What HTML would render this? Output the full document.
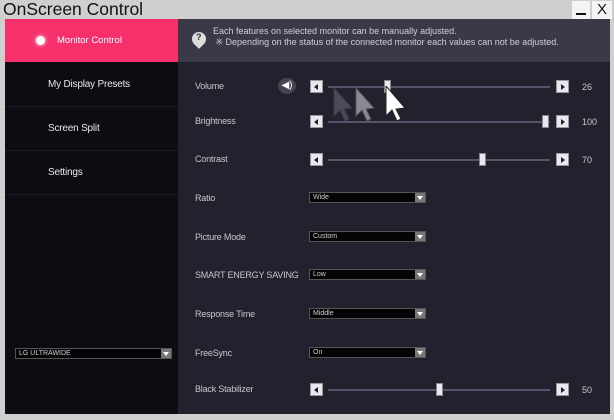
<!DOCTYPE html>
<html><head><meta charset="utf-8"><style>
*{margin:0;padding:0;box-sizing:border-box}
body{width:614px;height:420px;background:#cfcfcf;font-family:"Liberation Sans",sans-serif;position:relative;overflow:hidden}
.a{position:absolute}
.title{left:3px;top:-1px;font-size:17.5px;color:#111;line-height:20px}
.win{left:5px;top:19px;width:605px;height:395px;background:#22212e}
.side{left:5px;top:19px;width:173px;height:395px;background:#0d0c13}
.pink{left:5px;top:19px;width:173px;height:43px;background:#f5306b}
.info{left:178px;top:19px;width:432px;height:43px;background:#3a3948}
.si{left:48px;font-size:10px;color:#e8e8e8;letter-spacing:-0.2px}
.sep{left:5px;width:173px;height:1px;background:#1d1c26}
.lbl{left:195px;font-size:9px;color:#c8c8d0;letter-spacing:-0.2px}
.btn{width:13px;height:13px;background:#e8e8f0;border:1px solid #999}
.btn:after{content:"";position:absolute;top:3px;border-top:3px solid transparent;border-bottom:3px solid transparent}
.l:after{left:3px;border-right:4px solid #222}
.r:after{left:4px;border-left:4px solid #222}
.track{left:328px;width:222px;height:2px;background:#55546a}
.thumb{width:7px;height:13px;background:#e8e8f0;border:1px solid #888}
.val{left:582px;font-size:9px;color:#c8c8d0}
.dd{left:309px;width:117px;height:11px;background:#050508;border:1px solid #555}
.dd span{position:absolute;left:3px;top:0;font-size:7px;color:#ccc;line-height:9px}
.dd i{position:absolute;right:0;top:0;width:10px;height:9px;background:#777}
.dd i:after{content:"";position:absolute;left:2px;top:3px;border-left:3px solid transparent;border-right:3px solid transparent;border-top:4px solid #fff}
</style></head><body>
<div class="a title">OnScreen Control</div>
<div class="a" style="left:572px;top:1px;width:18px;height:18px;background:#f4f4f4"><div class="a" style="left:4px;top:12px;width:10px;height:2px;background:#111"></div></div>
<div class="a" style="left:592px;top:1px;width:20px;height:18px;background:#f4f4f4;font-size:15px;text-align:center;line-height:18px;color:#111">X</div>
<div class="a win"></div>
<div class="a side"></div>
<div class="a pink"></div>
<div class="a" style="left:36px;top:36px;width:9px;height:9px;border-radius:50%;background:#fff;box-shadow:0 0 4px #fff"></div>
<div class="a" style="left:57px;top:35px;font-size:9.5px;color:#fff">Monitor Control</div>
<div class="a info"></div>
<div class="a" style="left:192px;top:32px;width:14px;height:14px;border-radius:50% 50% 50% 0;transform:rotate(-45deg);background:#ddd"></div>
<div class="a" style="left:196px;top:32px;font-size:9px;color:#333;font-weight:bold">?</div>
<div class="a" style="left:213px;top:26px;font-size:9px;color:#d0d0d8;line-height:11px">Each features on selected monitor can be manually adjusted.<br>&nbsp;※ Depending on the status of the connected monitor each values can not be adjusted.</div>
<div class="a si" style="top:79px">My Display Presets</div>
<div class="a sep" style="top:106px"></div>
<div class="a si" style="top:123px">Screen Split</div>
<div class="a sep" style="top:150px"></div>
<div class="a si" style="top:167px">Settings</div>
<div class="a sep" style="top:194px"></div>
<div class="a dd" style="left:15px;top:348px;width:157px"><span>LG ULTRAWIDE</span><i></i></div>

<div class="a lbl" style="top:81px">Volume</div>
<div class="a" style="left:278px;top:78px;width:18px;height:16px;border-radius:50%;background:#444452;color:#fff;font-size:10px;text-align:center;line-height:16px">◀)</div>
<div class="a lbl" style="top:116px">Brightness</div>
<div class="a lbl" style="top:154px">Contrast</div>
<div class="a lbl" style="top:193px">Ratio</div>
<div class="a lbl" style="top:232px">Picture Mode</div>
<div class="a lbl" style="top:270px">SMART ENERGY SAVING</div>
<div class="a lbl" style="top:309px">Response Time</div>
<div class="a lbl" style="top:348px">FreeSync</div>
<div class="a lbl" style="top:384px">Black Stabilizer</div>

<div class="a btn l" style="left:310px;top:80px"></div><div class="a track" style="top:86px"></div><div class="a thumb" style="left:384px;top:80px"></div><div class="a btn r" style="left:556px;top:80px"></div><div class="a val" style="top:82px">26</div>
<div class="a btn l" style="left:310px;top:115px"></div><div class="a track" style="top:121px"></div><div class="a thumb" style="left:542px;top:115px"></div><div class="a btn r" style="left:556px;top:115px"></div><div class="a val" style="top:117px">100</div>
<div class="a btn l" style="left:310px;top:153px"></div><div class="a track" style="top:159px"></div><div class="a thumb" style="left:479px;top:153px"></div><div class="a btn r" style="left:556px;top:153px"></div><div class="a val" style="top:155px">70</div>
<div class="a btn l" style="left:310px;top:383px"></div><div class="a track" style="top:389px"></div><div class="a thumb" style="left:436px;top:383px"></div><div class="a btn r" style="left:556px;top:383px"></div><div class="a val" style="top:385px">50</div>

<div class="a dd" style="top:192px"><span>Wide</span><i></i></div>
<div class="a dd" style="top:231px"><span>Custom</span><i></i></div>
<div class="a dd" style="top:269px"><span>Low</span><i></i></div>
<div class="a dd" style="top:308px"><span>Middle</span><i></i></div>
<div class="a dd" style="top:347px"><span>On</span><i></i></div>

<svg class="a" style="left:330px;top:86px" width="90" height="44" viewBox="0 0 90 44">
<path d="M4 2 L4 30 L10 24 L15 35 L19 33 L14 23 L22 22 Z" fill="#4a4a58" stroke="#3a3a48"/>
<path d="M26 2 L26 30 L32 24 L37 35 L41 33 L36 23 L44 22 Z" fill="#8a8a96" stroke="#555"/>
<path d="M56 0 L56 30 L62 24 L67 35 L71 33 L66 23 L75 22 Z" fill="#fff" stroke="#222"/>
</svg>
</body></html>
